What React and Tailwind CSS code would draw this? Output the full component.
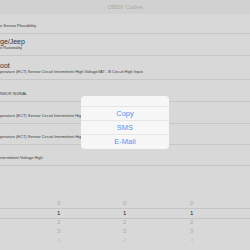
import React from "react";

const rows = [
  { h: "h-[20px]", sub: "e Sensor Plausibility" },
  { h: "h-[22px]", title: "ge/Jeep", sub: "e Rationality" },
  { h: "h-[24px]", title: "oot", sub: "perature (ECT) Sensor Circuit Intermittent High Voltage/IAT - B Circuit High Input" },
  { h: "h-[22px]", sub: "NSOR SIGNAL" },
  { h: "h-[22px]", sub: "perature (ECT) Sensor Circuit Intermittent High Voltage/IAT - B Circuit High Input" },
  { h: "h-[21px]", sub: "perature (ECT) Sensor Circuit Intermittent High Voltage/IAT - B Circuit High Input" },
  { h: "h-[21px]", sub: "ntermittent Voltage High" },
];

const wheel = ["0", "1", "2", "3", "4"];

export default function App() {
  return (
    <div className="relative w-[250px] h-[250px] overflow-hidden bg-[#d8d8d8] font-['Liberation_Sans',Arial,sans-serif]">
      {/* Nav bar */}
      <div className="h-[14px] bg-[#d1d1d1] flex items-center justify-center">
        <span className="text-[6px] text-[#a9a9a9]">OBDII Codes</span>
      </div>

      {/* Code list (dimmed behind the share sheet) */}
      {rows.map((r, i) => (
        <div key={i} className={`${r.h} border-b border-[#c6c6c6] flex flex-col justify-end pb-[5px] whitespace-nowrap overflow-hidden`}>
          {r.title && <div className="text-[7px] leading-[7px] text-[#333333] mb-[1px]">{r.title}</div>}
          <div className="text-[4px] leading-[4px] text-[#3a3a3a]">{r.sub}</div>
        </div>
      ))}

      {/* Picker */}
      <div className="mt-[33px] relative">
        <div className="absolute left-0 right-0 top-[9px] h-[11px] border-y border-[#c4c4c4]" />
        <div className="flex">
          {[0, 1, 2].map((c) => (
            <div key={c} className={`absolute flex flex-col items-center ${c === 0 ? "left-[57px]" : c === 1 ? "left-[123px]" : "left-[190px]"}`}>
              {wheel.map((n, j) => (
                <div
                  key={j}
                  className={`h-[9px] leading-[9px] text-[6px] ${
                    j === 1 ? "text-[#2a2a2a] h-[10px] leading-[10px]" : j === 4 ? "text-[#c8c8c8]" : "text-[#a8a8a8]"
                  }`}
                >
                  {n}
                </div>
              ))}
            </div>
          ))}
        </div>
      </div>

      {/* Share popover */}
      <div className="absolute left-[81px] top-[96px] w-[88px] rounded-[4px] bg-[#f7f7f7] flex flex-col">
        <div className="h-[11px] border-b border-[#e6e6e6]" />
        {["Copy", "SMS", "E-Mail"].map((t, i) => (
          <div
            key={t}
            className={`h-[14px] flex items-center justify-center text-[7.5px] text-[#4a97ee] ${i < 2 ? "border-b border-[#e6e6e6]" : ""}`}
          >
            {t}
          </div>
        ))}
      </div>
    </div>
  );
}
